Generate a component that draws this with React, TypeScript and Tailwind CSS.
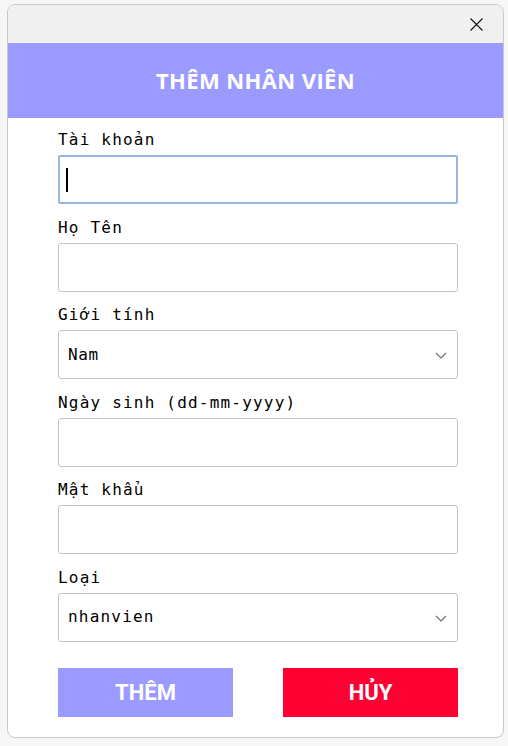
import { ReactNode } from 'react'

const mono = { fontFamily: '"DejaVu Sans Mono", "Liberation Mono", monospace' }

function Chevron() {
  return (
    <svg width="12" height="7" viewBox="0 0 12 7" className="absolute right-[10px] top-[21px]">
      <path d="M1 1 L6 6 L11 1" fill="none" stroke="#6b6b6b" strokeWidth="1.1" />
    </svg>
  )
}

function Field({ label, children }: { label: string; children: ReactNode }) {
  return (
    <div className="flex flex-col gap-[4px]">
      <div className="h-[22px] text-[16px] leading-[22px] tracking-[1.2px] text-black" style={mono}>
        {label}
      </div>
      {children}
    </div>
  )
}

function Box({ children, focused }: { children?: ReactNode; focused?: boolean }) {
  return (
    <div
      className={
        focused
          ? 'relative h-[49px] w-[400px] rounded-[2px] border-2 border-[#94b6e0] bg-white'
          : 'relative h-[49px] w-[400px] rounded-[3px] border border-[#c4c4c4] bg-white'
      }
    >
      {children}
    </div>
  )
}

export default function App() {
  return (
    <div className="h-[746px] w-[508px] bg-[#f6f6f6] pl-[7px] pt-[4px]">
      <div className="flex h-[734px] w-[497px] flex-col overflow-hidden rounded-[8px] border border-[#c9c9c9] bg-white">
        {/* Title bar */}
        <div className="flex h-[38px] items-center justify-end bg-[#f0f0f0] pr-[20px]">
          <svg width="13" height="13" viewBox="0 0 13 13">
            <path d="M0.5 0.5 L12.5 12.5 M12.5 0.5 L0.5 12.5" stroke="#111" strokeWidth="1.1" />
          </svg>
        </div>

        {/* Header */}
        <div className="flex h-[75px] items-center justify-center bg-[#9b9bff]">
          <h1
            className="text-[22px] font-bold tracking-[0.4px] text-white"
            style={{ fontFamily: '"Open Sans", sans-serif' }}
          >
            THÊM NHÂN VIÊN
          </h1>
        </div>

        {/* Form */}
        <div className="flex flex-col gap-[12.6px] pl-[50px] pt-[11px]">
          <Field label="Tài khoản">
            <Box focused>
              <div className="absolute left-[6px] top-[11px] h-[24px] w-[2px] bg-black" />
            </Box>
          </Field>
          <Field label="Họ Tên">
            <Box />
          </Field>
          <Field label="Giới tính">
            <Box>
              <div className="flex h-full items-center pl-[9px] text-[16px] tracking-[0.6px] text-black" style={mono}>
                Nam
              </div>
              <Chevron />
            </Box>
          </Field>
          <Field label="Ngày sinh (dd-mm-yyyy)">
            <Box />
          </Field>
          <Field label="Mật khẩu">
            <Box />
          </Field>
          <Field label="Loại">
            <Box>
              <div className="flex h-full items-center pl-[9px] text-[16px] tracking-[1.2px] text-black" style={mono}>
                nhanvien
              </div>
              <Chevron />
            </Box>
          </Field>
        </div>

        {/* Buttons */}
        <div className="mt-[26px] flex w-[400px] justify-between pl-[50px] box-content">
          <button
            className="h-[49px] w-[175px] bg-[#9b9bff] text-[22px] font-bold text-white"
            style={{ fontFamily: 'Roboto, sans-serif' }}
          >
            THÊM
          </button>
          <button
            className="h-[49px] w-[175px] bg-[#ff0033] text-[22px] font-bold text-white"
            style={{ fontFamily: 'Roboto, sans-serif' }}
          >
            HỦY
          </button>
        </div>
      </div>
    </div>
  )
}
